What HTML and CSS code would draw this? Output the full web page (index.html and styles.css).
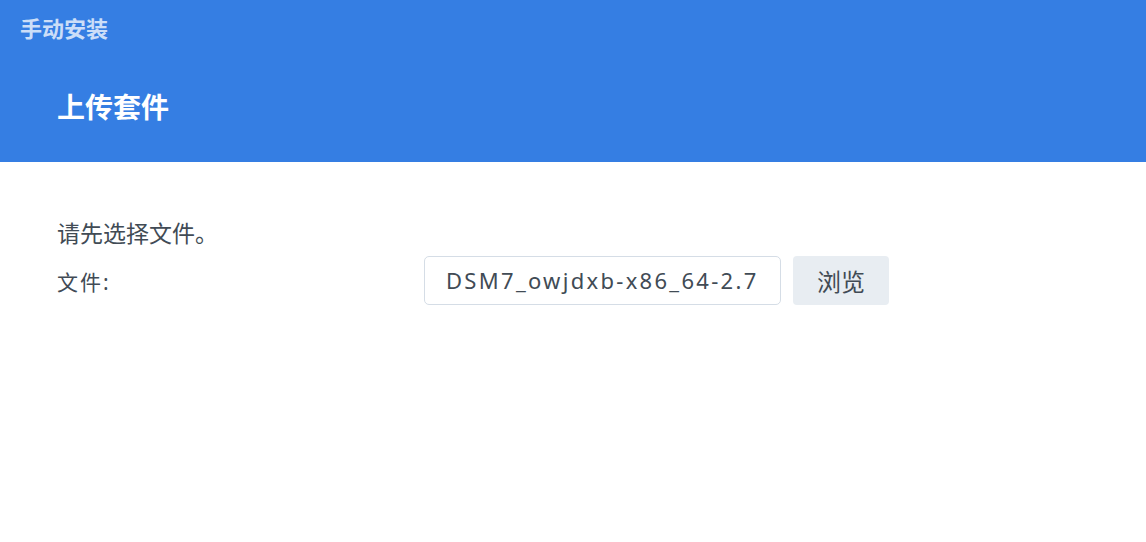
FILE: index.html
```html
<!DOCTYPE html>
<html lang="zh">
<head>
<meta charset="utf-8">
<link rel="stylesheet" href="styles.css">
</head>
<body>
<div class="header">
  <div class="window-title">手动安装</div>
  <h1 class="page-title">上传套件</h1>
</div>
<div class="content">
  <p class="hint">请先选择文件。</p>
  <div class="row">
    <label class="label">文件:</label>
    <div class="field">
      <div class="input">DSM7_owjdxb-x86_64-2.7</div>
      <button class="btn">浏览</button>
    </div>
  </div>
</div>
</body>
</html>
```
FILE: styles.css
```css
html, body { margin: 0; padding: 0; background: #fff; }
body { font-family: "Noto Sans", "Noto Sans CJK SC", sans-serif; color: #414b55; width: 1146px; height: 542px; overflow: hidden; }
.header { background: #357ee3; height: 162px; box-sizing: border-box; padding-top: 14px; }
.window-title { font-size: 22px; font-weight: 700; color: rgba(255,255,255,0.75); padding-left: 20px; line-height: 28px; }
.page-title { margin: 45px 0 0 57px; font-size: 28px; font-weight: 700; color: #fff; line-height: 40px; }
.content { padding: 56px 0 0 57px; }
.hint { margin: 0; font-size: 23px; line-height: 30px; }
.row { display: flex; align-items: center; margin-top: 8px; }
.label { width: 367px; font-size: 21px; letter-spacing: 2px; }
.field { display: flex; gap: 12px; }
.input { width: 357px; height: 49px; box-sizing: border-box; border: 1px solid #d5dde6; border-radius: 5px; padding: 0 20px 0 21px; font-size: 22px; line-height: 47px; white-space: nowrap; overflow: hidden; font-family: "Noto Sans", sans-serif; letter-spacing: 2.3px; }
.btn { width: 96px; height: 49px; border: none; border-radius: 4px; background: #e8edf2; color: #414b55; font-family: "Noto Sans CJK SC", sans-serif; font-size: 24px; padding: 0; }
```
